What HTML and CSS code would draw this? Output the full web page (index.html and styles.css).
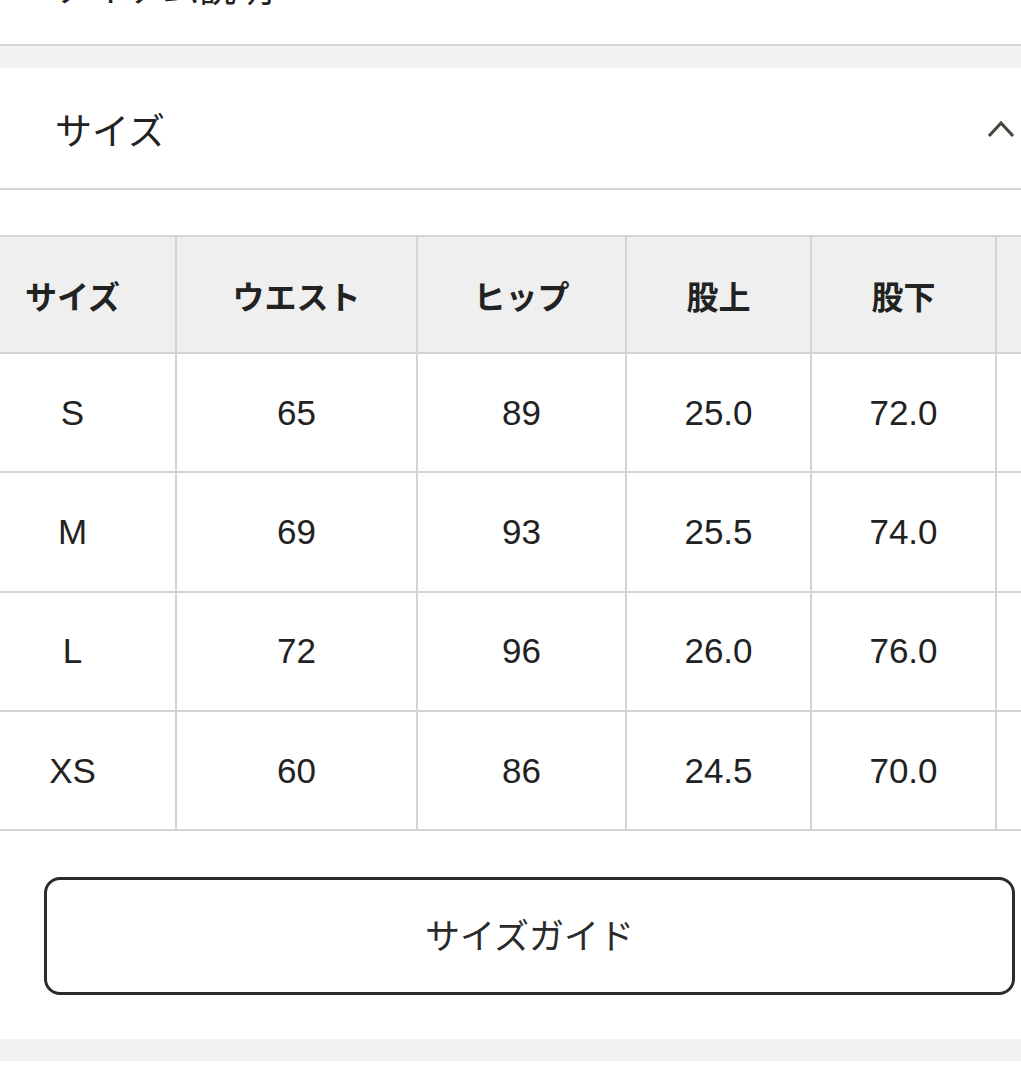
FILE: index.html
```html
<!DOCTYPE html>
<html lang="ja">
<head>
<meta charset="utf-8">
<link rel="stylesheet" href="styles.css">
</head>
<body>
<div class="prev">
  <div class="prev-title">アイテム説明</div>
</div>
<div class="band"></div>
<div class="acc-head">
  <span class="acc-title">サイズ</span>
  <svg class="chev" width="30" height="20" viewBox="0 0 30 20"><polyline points="2,17 14,4 26,17" fill="none" stroke="#4a463c" stroke-width="3.2"/></svg>
</div>
<div class="table-wrap">
  <table class="size-table">
    <colgroup>
      <col class="c1"><col class="c2"><col class="c3"><col class="c4"><col class="c5"><col class="c6">
    </colgroup>
    <thead>
      <tr><th>サイズ</th><th>ウエスト</th><th>ヒップ</th><th>股上</th><th>股下</th><th></th></tr>
    </thead>
    <tbody>
      <tr><td>S</td><td>65</td><td>89</td><td>25.0</td><td>72.0</td><td></td></tr>
      <tr><td>M</td><td>69</td><td>93</td><td>25.5</td><td>74.0</td><td></td></tr>
      <tr><td>L</td><td>72</td><td>96</td><td>26.0</td><td>76.0</td><td></td></tr>
      <tr><td>XS</td><td>60</td><td>86</td><td>24.5</td><td>70.0</td><td></td></tr>
    </tbody>
  </table>
</div>
<div class="btn-row">
  <button class="guide-btn">サイズガイド</button>
</div>
<div class="band"></div>
</body>
</html>
```

FILE: styles.css
```css
html, body {
  margin: 0;
  padding: 0;
  background: #fff;
}
body {
  font-family: "Liberation Sans", "Noto Sans CJK JP", sans-serif;
  color: #222;
  overflow: hidden;
}
.prev {
  display: flow-root;
  height: 44px;
  border-bottom: 2px solid #d6d6d6;
  padding-left: 55px;
}
.prev-title {
  font-size: 37px;
  line-height: 40px;
  margin-top: -34px;
  font-family: "Noto Sans CJK JP", sans-serif;
}
.band {
  height: 22px;
  background: #f2f2f2;
}
.acc-head {
  height: 120px;
  border-bottom: 2px solid #d4d4d4;
  display: flex;
  align-items: center;
  justify-content: space-between;
  padding-left: 55px;
  padding-right: 4px;
}
.acc-title {
  font-family: "Noto Sans CJK JP", sans-serif;
  font-size: 37px;
  color: #222;
  line-height: 1;
  margin-top: 2px;
}
.chev {
  display: block;
  margin-top: 1px;
}
.table-wrap {
  margin-top: 45px;
  overflow: hidden;
  width: 100%;
}
.size-table {
  margin-left: -30px;
  width: 1224px;
  border-collapse: separate;
  border-spacing: 0;
  border-top: 2px solid #d4d4d4;
  table-layout: fixed;
}
.size-table th,
.size-table td {
  border-right: 2px solid #d4d4d4;
  border-bottom: 2px solid #d4d4d4;
  text-align: center;
  vertical-align: middle;
  padding: 0;
}
.size-table th {
  background: #efefef;
  height: 115px;
  font-family: "Noto Sans CJK JP", sans-serif;
  font-weight: 700;
  font-size: 32px;
  color: #222;
}
.size-table td {
  height: 117.3px;
  font-size: 35px;
  color: #222;
}
.c1 { width: 207px; }
.c2 { width: 241px; }
.c3 { width: 209px; }
.c4 { width: 185px; }
.c5 { width: 185px; }
.c6 { width: 197px; }
.btn-row {
  padding: 46px 6px 44px 44px;
}
.guide-btn {
  display: block;
  width: 100%;
  height: 118px;
  border: 3px solid #2f2b26;
  border-radius: 16px;
  background: #fff;
  font-family: "Noto Sans CJK JP", sans-serif;
  font-size: 35px;
  color: #2a2a2a;
  padding: 0 0 5px 0;
  margin: 0;
}
```
